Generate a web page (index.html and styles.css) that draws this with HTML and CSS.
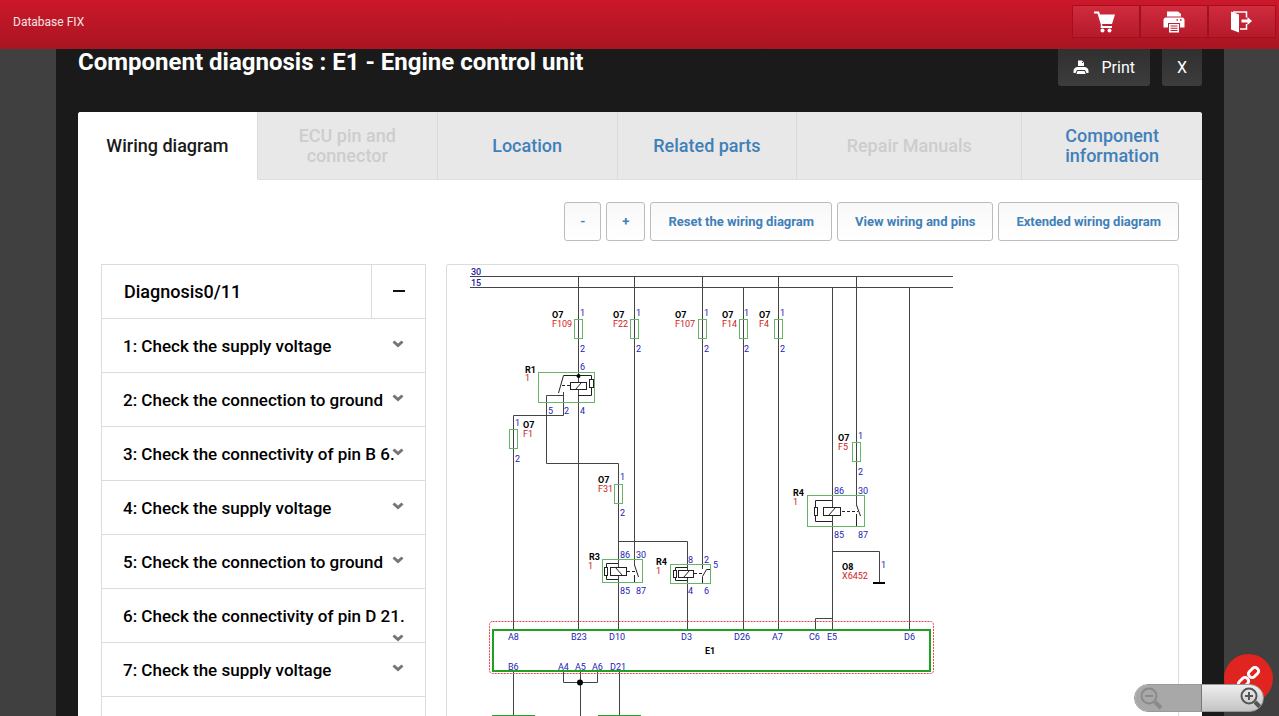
FILE: index.html
```html
<!DOCTYPE html>
<html lang="en">
<head>
<meta charset="utf-8">
<title>Component diagnosis</title>
<link rel="stylesheet" href="styles.css">
</head>
<body>
<header class="topbar">
  <span class="brand">Database FIX</span>
  <nav class="top-actions">
    <button class="top-btn" aria-label="Cart">
      <svg width="26" height="24" viewBox="0 0 26 24" fill="#fff"><path d="M1 1.500h5L7 4.500h15L19 14H9l.5 2H19v2H7.500l.5-3L4.500 3.500H1z"/><circle cx="9.500" cy="20.500" r="2"/><circle cx="16.500" cy="20.500" r="2"/></svg>
    </button>
    <button class="top-btn" aria-label="Print page">
      <svg width="24" height="24" viewBox="0 0 24 24" fill="#fff"><path d="M5 1.500h11L19 4v2.500H5z"/><path fill-rule="evenodd" d="M4 7.500h16Q22.500 7.500 22.500 10v7.500H18V13H6v4.500H1.500V10Q1.500 7.500 4 7.500zM14.500 9.200v1.500H16V9.200zm3.500 0v1.500h1.500V9.200z"/><path fill-rule="evenodd" d="M7 14h10v8.500H7zm1.500 1.500v1h7v-1zm0 2.300v1h7v-1zm0 2.200v1h7v-1z"/></svg>
    </button>
    <button class="top-btn" aria-label="Log out">
      <svg width="24" height="24" viewBox="0 0 24 24" fill="#fff"><path d="M1 1.500 9 4.500V22.500l-8-3z"/><path d="M3 2h13.500V7.500M10 19h6.500V14" fill="none" stroke="#fff" stroke-width="1.500"/><path d="M11.500 9.500H17.500V7l4.500 4-4.500 4v-2.500h-6z"/></svg>
    </button>
  </nav>
</header>

<main class="dialog">
  <div class="title-row">
    <h1 class="title">Component diagnosis : E1 - Engine control unit</h1>
    <div class="title-actions">
      <button class="dark-btn">
        <svg width="16" height="16" viewBox="0 0 16 16" fill="#fff"><path fill-rule="evenodd" d="M5 .5h4L11 2.500V6H5zM9 1.500V3h1.500z"/><path d="M4 7h8q3 .5 3.500 3.500V13h-2L12 10H4l-1.500 3h-2v-2.500Q1 7.500 4 7z"/><path d="M4.500 11h7l1.200 3H3.300z"/></svg>
        Print
      </button>
      <button class="dark-btn">X</button>
    </div>
  </div>

  <section class="panel">
    <nav class="tabs">
      <button class="tab active">Wiring diagram</button>
      <button class="tab" disabled>ECU pin and<br>connector</button>
      <button class="tab">Location</button>
      <button class="tab">Related parts</button>
      <button class="tab" disabled>Repair Manuals</button>
      <button class="tab">Component<br>information</button>
    </nav>

    <div class="toolbar">
      <button class="tool sign">-</button>
      <button class="tool sign">+</button>
      <button class="tool">Reset the wiring diagram</button>
      <button class="tool">View wiring and pins</button>
      <button class="tool">Extended wiring diagram</button>
    </div>

    <div class="content">
      <aside class="steps">
        <div class="steps-head">
          <h2 class="steps-title">Diagnosis0/11</h2>
          <button class="collapse" aria-label="Collapse"><svg width="14" height="14" viewBox="0 0 14 14"><path d="M1 6h12" stroke="#111" stroke-width="2"/></svg></button>
        </div>
        <button class="step">1: Check the supply voltage<svg class="chev" viewBox="0 0 12 8"><path d="M1.500 1.500 6 5.500l4.500-4"/></svg></button>
        <button class="step">2: Check the connection to ground<svg class="chev" viewBox="0 0 12 8"><path d="M1.500 1.500 6 5.500l4.500-4"/></svg></button>
        <button class="step">3: Check the connectivity of pin B 6.<svg class="chev" viewBox="0 0 12 8"><path d="M1.500 1.500 6 5.500l4.500-4"/></svg></button>
        <button class="step">4: Check the supply voltage<svg class="chev" viewBox="0 0 12 8"><path d="M1.500 1.500 6 5.500l4.500-4"/></svg></button>
        <button class="step">5: Check the connection to ground<svg class="chev" viewBox="0 0 12 8"><path d="M1.500 1.500 6 5.500l4.500-4"/></svg></button>
        <button class="step wrapped">6: Check the connectivity of pin D 21.<svg class="chev" viewBox="0 0 12 8"><path d="M1.500 1.500 6 5.500l4.500-4"/></svg></button>
        <button class="step">7: Check the supply voltage<svg class="chev" viewBox="0 0 12 8"><path d="M1.500 1.500 6 5.500l4.500-4"/></svg></button>
      </aside>

      <div class="diagram">
        <svg class="wiring" width="500" height="451" viewBox="447 265 500 451">
          <g class="wire">
            <path d="M470 276.500H953M470 287.500H953"/>
            <path d="M578.500 276V629M634.500 276V565M702.500 276V569M778.500 276V629M856.500 276V505M743.500 287V629M832.500 287V629M909.500 287V629"/>
            <path d="M563.500 392V415.500H513.500V629M563.500 395.500H546.500V463.500H618.500V629M618.500 541.500H687.500V629"/>
            <path d="M832.500 551.500H879.500V582M815.500 629V618.500H832"/>
            <path d="M513.500 671V716M619.500 671V716M580.500 671V716M563.500 671V682.500H597.500V671"/>
          </g>
          <g class="part">
            <path d="M578 375.500H563.500L558.500 393M578 375.500H591.500V395.500H578"/>
            <rect class="solid" x="570.500" y="382.500" width="16" height="7"/><path d="M575.500 389.500l6-7"/>
            <rect class="solid" x="589.500" y="379.500" width="4" height="8"/>
            <path class="dash" d="M562 385.500h8"/>

            <path d="M618 563.500H606.500V579.500H618M634.500 565l4 12M634.500 575v8"/>
            <rect class="solid" x="610.500" y="567.500" width="16" height="8"/><path d="M615.500 567.500l7 8"/>
            <rect class="solid" x="604.500" y="567.500" width="3" height="8"/>
            <path class="dash" d="M627 571.500h9"/>

            <path d="M687 567.500H675.500V580.500H687M710.500 569.500h-4l-4 7V583"/>
            <rect class="solid" x="678.500" y="570.500" width="15" height="7"/><path d="M683.500 577.500l6-7"/>
            <rect class="solid" x="673.500" y="570.500" width="3" height="7"/>
            <path class="dash" d="M694 573.500h10"/>

            <path d="M832 500.500H815.500V521.500H832M856.500 505l4 11M856.500 514v13"/>
            <rect class="solid" x="823.500" y="507.500" width="17" height="8"/><path d="M828.500 515.500l7-8"/>
            <rect class="solid" x="814.500" y="507.500" width="3" height="8"/>
            <path class="dash" d="M842 511.500h16"/>
          </g>
          <path d="M873 583h12" stroke="#000" stroke-width="2"/>
          <circle cx="578.500" cy="376" r="2"/><circle cx="580" cy="682.500" r="3"/>
          <g class="frame">
            <rect x="574.500" y="319.500" width="8" height="19"/><rect x="630.500" y="319.500" width="8" height="19"/><rect x="698.500" y="319.500" width="8" height="19"/><rect x="739.500" y="319.500" width="8" height="19"/><rect x="774.500" y="319.500" width="8" height="19"/>
            <rect x="852.500" y="442.500" width="8" height="19"/><rect x="509.500" y="429.500" width="8" height="19"/><rect x="614.500" y="484.500" width="8" height="19"/>
            <rect x="538.500" y="372.500" width="56" height="30"/><rect x="602.500" y="559.500" width="40" height="23"/><rect x="670.500" y="564.500" width="40" height="19"/><rect x="807.500" y="495.500" width="57" height="31"/>
          </g>
          <rect class="selection" x="489.500" y="621.500" width="444" height="52" rx="3"/>
          <rect class="unit" x="493" y="630" width="437" height="41"/>
          <path class="unit" d="M492 716h43M598 716h43"/>
          <g class="bus"><text x="471" y="275">30</text><text x="471" y="286">15</text></g>
          <g class="name">
            <text x="552" y="318">O7</text><text x="613" y="318">O7</text><text x="675" y="318">O7</text><text x="722" y="318">O7</text><text x="759" y="318">O7</text>
            <text x="525" y="373">R1</text><text x="523" y="428">O7</text><text x="598" y="483">O7</text><text x="589" y="560">R3</text><text x="656" y="565">R4</text>
            <text x="838" y="441">O7</text><text x="793" y="496">R4</text><text x="842" y="570">O8</text><text x="705" y="654">E1</text>
          </g>
          <g class="ref">
            <text x="552" y="327">F109</text><text x="613" y="327">F22</text><text x="675" y="327">F107</text><text x="722" y="327">F14</text><text x="759" y="327">F4</text>
            <text x="525" y="381">1</text><text x="523" y="437">F1</text><text x="598" y="492">F31</text><text x="588" y="569">1</text><text x="656" y="574">1</text>
            <text x="838" y="450">F5</text><text x="793" y="505">1</text><text x="842" y="579">X6452</text>
          </g>
          <g class="pin">
            <text x="580" y="316">1</text><text x="636" y="316">1</text><text x="704" y="316">1</text><text x="744" y="316">1</text><text x="780" y="316">1</text>
            <text x="580" y="352">2</text><text x="636" y="352">2</text><text x="704" y="352">2</text><text x="744" y="352">2</text><text x="780" y="352">2</text>
            <text x="580" y="370">6</text><text x="548" y="414">5</text><text x="564" y="414">2</text><text x="580" y="414">4</text>
            <text x="515" y="426">1</text><text x="515" y="462">2</text><text x="620" y="480">1</text><text x="620" y="516">2</text>
            <text x="858" y="439">1</text><text x="858" y="475">2</text>
            <text x="834" y="494">86</text><text x="858" y="494">30</text><text x="834" y="538">85</text><text x="858" y="538">87</text><text x="881" y="568">1</text>
            <text x="620" y="558">86</text><text x="636" y="558">30</text><text x="620" y="594">85</text><text x="636" y="594">87</text>
            <text x="688" y="563">8</text><text x="704" y="563">2</text><text x="713" y="568">5</text><text x="688" y="594">4</text><text x="704" y="594">6</text>
            <text x="508" y="640">A8</text><text x="571" y="640">B23</text><text x="609" y="640">D10</text><text x="681" y="640">D3</text><text x="734" y="640">D26</text><text x="772" y="640">A7</text><text x="809" y="640">C6</text><text x="827" y="640">E5</text><text x="904" y="640">D6</text>
            <text x="508" y="670">B6</text><text x="558" y="670">A4</text><text x="575" y="670">A5</text><text x="592" y="670">A6</text><text x="610" y="670">D21</text>
          </g>
        </svg>
      </div>
    </div>
  </section>
</main>

<button class="link-fab" aria-label="Links">
  <svg width="26" height="26" viewBox="0 0 26 26" fill="none" stroke="#fff" stroke-width="3"><rect x="-5.500" y="-3.500" width="11" height="7" rx="3" transform="translate(17.500 6.500) rotate(-45)"/><rect x="-5.500" y="-3.500" width="11" height="7" rx="3" transform="translate(7.500 16.500) rotate(-45)"/></svg>
</button>
<div class="zoomer">
  <button class="zoom-btn out" aria-label="Zoom out"><svg width="24" height="24" viewBox="0 0 24 24"><circle cx="10" cy="10" r="7.500"/><path d="M6 10h8"/><path class="handle" d="M16 16l6 6"/></svg></button>
  <button class="zoom-btn in" aria-label="Zoom in"><svg width="24" height="24" viewBox="0 0 24 24"><circle cx="10" cy="10" r="7.500"/><path d="M6 10h8M10 6v8"/><path class="handle" d="M16 16l5 5"/></svg></button>
</div>
</body>
</html>
```
FILE: styles.css
```css
* { box-sizing: border-box; }
body {
  margin: 0;
  height: 100vh;
  overflow: hidden;
  display: flex;
  flex-direction: column;
  background: #404040;
  font-family: Roboto, "Liberation Sans", sans-serif;
  color: #111;
}
button { font-family: inherit; border: 0; padding: 0; cursor: pointer; }
svg { display: block; }

.topbar {
  flex: none;
  height: 49px;
  display: flex;
  justify-content: space-between;
  align-items: flex-start;
  padding: 5px 3px 0 13px;
  background: linear-gradient(#cb182a, #a91522);
}
.brand { color: #f6e4e4; font-size: 12px; line-height: 34px; }
.top-actions { display: flex; }
.top-btn {
  width: 68px;
  height: 33px;
  display: grid;
  place-items: center;
  background: linear-gradient(#d02c3e, #b41a2a);
  border: 1px solid #a30f1e;
}

.dialog {
  flex: 1;
  min-height: 0;
  display: flex;
  flex-direction: column;
  margin: 0 55px 0 56px;
  padding: 0 22px;
  background: #1a1a1a;
}
.title-row { flex: none; display: flex; justify-content: space-between; align-items: flex-start; height: 63px; }
.title { margin: 0; color: #fff; font-size: 24px; line-height: 27px; font-weight: 700; }
.title-actions { display: flex; gap: 12px; }
.dark-btn {
  height: 37px;
  padding: 0 15px;
  display: flex;
  align-items: center;
  gap: 12px;
  border-radius: 0 0 3px 3px;
  background: linear-gradient(#303030, #3c3c3c);
  color: #fff;
  font-size: 16px;
}

.panel {
  flex: 1;
  min-height: 0;
  display: flex;
  flex-direction: column;
  overflow: hidden;
  background: #fff;
  border-radius: 3px 3px 0 0;
}
.tabs { flex: none; display: grid; grid-template-columns: 4fr 4fr 4fr 4fr 5fr 4fr; height: 68px; }
.tab {
  background: #e8e8e8;
  border-right: 1px solid #dadada;
  border-bottom: 1px solid #dedede;
  color: #3f80b9;
  font-size: 18px;
  line-height: 20px;
  font-weight: 500;
}
.tab:disabled { color: #cdcdcd; }
.tab:last-child { border-right: 0; }
.tab.active { background: #fff; border-bottom-color: #fff; color: #1a1a1a; }

.toolbar { flex: none; display: flex; justify-content: flex-end; gap: 5px; padding: 22px 23px 23px; }
.tool {
  height: 39px;
  padding: 0 17px;
  border: 1px solid #bcbcbc;
  border-radius: 3px;
  background: linear-gradient(#f8f8f8, #fff);
  color: #3f80b9;
  font-size: 13px;
  font-weight: 700;
}
.sign { padding: 0 15px; }

.content { flex: 1; min-height: 0; display: flex; gap: 20px; padding: 0 23px; }
.steps { flex: none; width: 325px; border: 1px solid #dcdcdc; border-bottom: 0; }
.steps-head { display: flex; height: 54px; border-bottom: 1px solid #dcdcdc; }
.steps-title { flex: 1; margin: 0; padding-left: 22px; font-size: 18px; line-height: 53px; font-weight: 500; color: #000; }
.collapse { width: 54px; display: grid; place-items: center; background: #fff; border-left: 1px solid #dcdcdc; }
.step {
  position: relative;
  display: block;
  width: 100%;
  height: 54px;
  padding-left: 21px;
  background: #fff;
  border-bottom: 1px solid #dcdcdc;
  color: #000;
  font-size: 17px;
  font-weight: 500;
  text-align: left;
  white-space: nowrap;
}
.chev {
  position: absolute;
  right: 21px;
  top: 21px;
  width: 12px;
  height: 8px;
  fill: none;
  stroke: #757575;
  stroke-width: 3;
}
.wrapped .chev { top: 45px; }

.diagram { flex: 1; overflow: hidden; border: 1px solid #dcdcdc; border-bottom: 0; border-radius: 3px 3px 0 0; }
.wiring { overflow: visible; }
.wire { fill: none; stroke: #444; }
.part { fill: none; stroke: #222; }
.solid { fill: #fff; }
.dash { stroke-dasharray: 3 2; }
.frame { fill: none; stroke: #66b566; }
.unit { fill: none; stroke: #22a022; stroke-width: 2; }
.selection { fill: none; stroke: #e04848; stroke-dasharray: 2 1; }
.bus, .name, .ref, .pin { font-size: 9px; }
.bus { fill: #1c1ca0; font-weight: 500; }
.name { fill: #000; font-weight: 700; }
.ref { fill: #d02020; }
.pin { fill: #2222b8; }

.link-fab {
  position: fixed;
  right: 6px;
  bottom: 13px;
  width: 49px;
  height: 49px;
  display: grid;
  place-items: center;
  border-radius: 50%;
  background: #e0241f;
}
.zoomer {
  position: fixed;
  right: 15px;
  bottom: 4px;
  width: 130px;
  height: 28px;
  display: flex;
  overflow: hidden;
  border: 1px solid #999;
  border-radius: 14px;
}
.zoom-btn { flex: 1; display: flex; align-items: center; }
.zoom-btn svg { fill: none; stroke: #555; stroke-width: 2; }
.zoom-btn .handle { stroke-width: 4; }
.out { padding-left: 4px; background: #a8a8a8; border-right: 1px solid #777; }
.zoom-btn.out svg { stroke: #8a8a8a; }
.in { justify-content: flex-end; background: linear-gradient(#eee, #c4c4c4); }
```
